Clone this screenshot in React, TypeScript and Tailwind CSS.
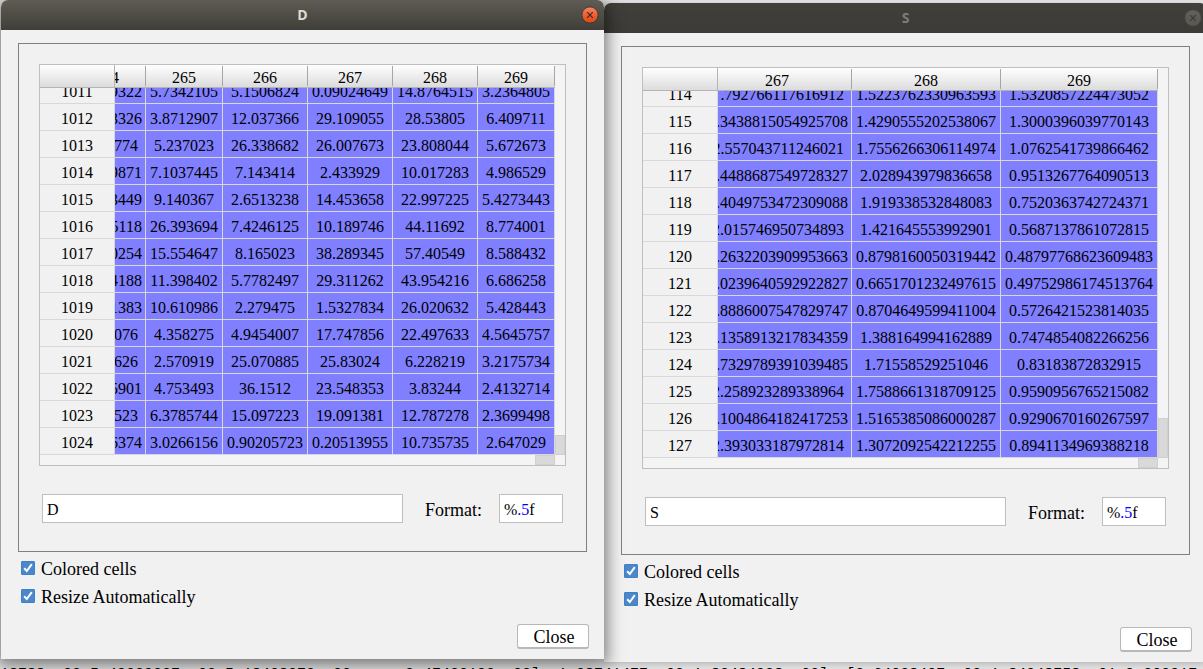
import React from "react";

type Column = { label: string; width: string; headAlign?: string };
type WindowProps = {
  name: string;
  active: boolean;
  place: string;
  columns: Column[];
  rows: string[][];
  thumb: string;
};

const dColumns: Column[] = [
  { label: "264", width: "w-[31px]", headAlign: "justify-end pr-[26px]" },
  { label: "265", width: "w-[77px]" },
  { label: "266", width: "w-[85px]" },
  { label: "267", width: "w-[85px]" },
  { label: "268", width: "w-[85px]" },
  { label: "269", width: "w-[77px]" },
];

const dRows: string[][] = [
  ["1011", "9322", "5.7342105", "5.1506824", "0.09024649", "14.8764515", "3.2364805"],
  ["1012", "3326", "3.8712907", "12.037366", "29.109055", "28.53805", "6.409711"],
  ["1013", "774", "5.237023", "26.338682", "26.007673", "23.808044", "5.672673"],
  ["1014", "9871", "7.1037445", "7.143414", "2.433929", "10.017283", "4.986529"],
  ["1015", "3449", "9.140367", "2.6513238", "14.453658", "22.997225", "5.4273443"],
  ["1016", "5118", "26.393694", "7.4246125", "10.189746", "44.11692", "8.774001"],
  ["1017", "0254", "15.554647", "8.165023", "38.289345", "57.40549", "8.588432"],
  ["1018", "4188", "11.398402", "5.7782497", "29.311262", "43.954216", "6.686258"],
  ["1019", "1383", "10.610986", "2.279475", "1.5327834", "26.020632", "5.428443"],
  ["1020", "076", "4.358275", "4.9454007", "17.747856", "22.497633", "4.5645757"],
  ["1021", "626", "2.570919", "25.070885", "25.83024", "6.228219", "3.2175734"],
  ["1022", "5901", "4.753493", "36.1512", "23.548353", "3.83244", "2.4132714"],
  ["1023", "523", "6.3785744", "15.097223", "19.091381", "12.787278", "2.3699498"],
  ["1024", "6374", "3.0266156", "0.90205723", "0.20513955", "10.735735", "2.647029"],
];

const sColumns: Column[] = [
  { label: "267", width: "w-[134px]", headAlign: "justify-end pr-[62px]" },
  { label: "268", width: "w-[149px]" },
  { label: "269", width: "w-[157px]" },
];

const sRows: string[][] = [
  ["114", ".792766117616912", "1.5223762330963593", "1.5320857224473052"],
  ["115", ".3438815054925708", "1.4290555202538067", "1.3000396039770143"],
  ["116", "2.557043711246021", "1.7556266306114974", "1.0762541739866462"],
  ["117", ".4488687549728327", "2.028943979836658", "0.9513267764090513"],
  ["118", ".4049753472309088", "1.919338532848083", "0.7520363742724371"],
  ["119", "2.015746950734893", "1.421645553992901", "0.5687137861072815"],
  ["120", ".2632203909953663", "0.8798160050319442", "0.48797768623609483"],
  ["121", ".0239640592922827", "0.6651701232497615", "0.49752986174513764"],
  ["122", ".8886007547829747", "0.8704649599411004", "0.5726421523814035"],
  ["123", ".1358913217834359", "1.388164994162889", "0.7474854082266256"],
  ["124", ".7329789391039485", "1.71558529251046", "0.83183872832915"],
  ["125", "2.258923289338964", "1.7588661318709125", "0.9590956765215082"],
  ["126", ".1004864182417253", "1.5165385086000287", "0.9290670160267597"],
  ["127", "2.393033187972814", "1.3072092542212255", "0.8941134969388218"],
];

/* Values in the first, partly scrolled-out column keep the right gap of their centred text. */
function edgeGap(text: string) {
  const short = text.length === 3 || text.startsWith("2.") || text.length === 16;
  return short ? "justify-end pr-[7px]" : "justify-end pr-[3px]";
}

function Cell({ text, first, align }: { text: string; first: boolean; align: string }) {
  return (
    <div className={`flex items-end overflow-hidden whitespace-nowrap ${first ? "h-[15px]" : "h-[26px]"} ${align}`}>
      <span className="h-[26px] leading-[29px]">{text}</span>
    </div>
  );
}

function Grid({ name, columns, rows, thumb }: Pick<WindowProps, "name" | "columns" | "rows" | "thumb">) {
  return (
    <div className="grid grid-cols-[1fr_10px] border border-[#bfbfbf] bg-[#f4f4f4]">
      <table aria-label={name} className="w-full table-fixed border-separate border-spacing-0 text-base">
        <colgroup>
          <col className="w-[75px]" />
          {columns.map((c) => (
            <col key={c.label} className={c.width} />
          ))}
        </colgroup>
        <thead>
          <tr>
            <td className="border-r border-b border-[#b4b4b4] bg-linear-to-b from-white to-[#dcdcdc] p-0" />
            {columns.map((c) => (
              <th
                key={c.label}
                scope="col"
                className="border-b border-[#b4b4b4] bg-linear-to-b from-white to-[#dcdcdc] p-0 font-normal"
              >
                <div className="flex h-[22px] items-center">
                  <div className={`flex h-5 flex-1 items-end overflow-hidden border-r border-[#a6a6a6] ${c.headAlign ?? "justify-center"}`}>
                    <span className="h-5 leading-[23px]">{c.label}</span>
                  </div>
                </div>
              </th>
            ))}
          </tr>
        </thead>
        <tbody>
          {rows.map((row, r) => (
            <tr key={row[0]}>
              <th scope="row" className="border-r border-b border-[#d8d8d8] bg-[#f1f1f1] p-0 font-normal">
                <Cell text={row[0]} first={r === 0} align="justify-center" />
              </th>
              {row.slice(1).map((value, i) => (
                <td key={i} className="border-r border-b border-[#d8d8d8] bg-[#7f7fff] p-0">
                  <Cell text={value} first={r === 0} align={i === 0 ? edgeGap(value) : "justify-center"} />
                </td>
              ))}
            </tr>
          ))}
        </tbody>
      </table>
      <div className="flex flex-col justify-end">
        <div className={`border border-[#d0d0d0] bg-[#d9d9d9] ${thumb}`} />
      </div>
      <div className="flex h-[10px] justify-end">
        <div className="w-5 border border-[#d0d0d0] bg-[#d9d9d9]" />
      </div>
    </div>
  );
}

function Check({ label }: { label: string }) {
  return (
    <label className="flex h-7 items-start gap-[6px] text-lg leading-[17px]">
      <span className="grid size-[14px]">
        <input
          type="checkbox"
          defaultChecked
          className="peer col-start-1 row-start-1 size-[14px] appearance-none rounded-[1px] border border-[#4080c4] bg-white checked:bg-[#4a87cb]"
        />
        <svg
          viewBox="0 0 14 14"
          className="pointer-events-none invisible col-start-1 row-start-1 size-[14px] peer-checked:visible"
          fill="none"
          stroke="white"
          strokeWidth="2"
        >
          <path d="M3.2 7.2 5.8 10 10.8 3.2" />
        </svg>
      </span>
      {label}
    </label>
  );
}

function DialogWindow({ name, active, place, columns, rows, thumb }: WindowProps) {
  return (
    <section
      aria-label={name}
      className={`absolute w-[603px] rounded-t-[7px] bg-[#f1f1f1] ${place} ${
        active ? "shadow-[0_3px_16px_3px_rgba(0,0,0,0.5)]" : "shadow-[0_2px_10px_rgba(0,0,0,0.25)]"
      }`}
    >
      <header
        className={`grid h-[30px] grid-cols-[1fr_auto_1fr] items-center rounded-t-[7px] px-[5px] ${
          active
            ? "bg-linear-to-b from-[#5e5c54] to-[#3f3e38]"
            : "bg-linear-to-b from-[#403f3a] to-[#3c3b37]"
        }`}
      >
        <h2
          className={`col-start-2 font-['Open_Sans',sans-serif] text-sm font-bold ${
            active ? "text-[#dfdbd2]" : "text-[#7f7d78]"
          }`}
        >
          {name}
        </h2>
        <button type="button" aria-label={`Close ${name}`} className="justify-self-end">
          <svg viewBox="0 0 18 18" className="size-[18px]">
            <defs>
              <linearGradient id={`close-${name}`} x1="0" y1="0" x2="0" y2="1">
                <stop offset="0" stopColor={active ? "#f58a68" : "#64625d"} />
                <stop offset="0.5" stopColor={active ? "#ee5f33" : "#5d5b56"} />
                <stop offset="1" stopColor={active ? "#dd4814" : "#5a5853"} />
              </linearGradient>
            </defs>
            <circle cx="9" cy="9" r="8.1" fill={`url(#close-${name})`} stroke={active ? "#37352f" : "#4b4a45"} strokeWidth="0.8" />
            <path d="M6.2 6.2 11.8 11.8M11.8 6.2 6.2 11.8" stroke={active ? "#3b2a20" : "#3c3b37"} strokeWidth="1.2" />
          </svg>
        </button>
      </header>
      <div className="px-[17px] pt-[13px] pb-[10px]">
        <div className="flex flex-col gap-7 border border-[#808080] px-5 pt-5 pb-7">
          <Grid name={name} columns={columns} rows={rows} thumb={thumb} />
          <div className="flex items-center px-[3px] text-lg">
            <input
              aria-label="Name"
              defaultValue={name}
              className="h-[29px] min-w-0 flex-1 border border-[#bfbfbf] bg-white px-1 pt-[2px] text-base outline-none"
            />
            <label htmlFor={`format-${name}`} className="w-24 pt-[2px] pl-[22px] leading-6">
              Format:
            </label>
            <span className="grid h-[29px] w-16 grid-rows-[29px]">
              <input
                id={`format-${name}`}
                defaultValue="%.5f"
                className="col-start-1 row-start-1 min-w-0 border border-[#bfbfbf] bg-white px-1 text-base text-transparent caret-black outline-none"
              />
              <span aria-hidden="true" className="pointer-events-none col-start-1 row-start-1 pl-[5px] text-base leading-[31px]">
                %<span className="text-[#0000ff]">.5</span>f
              </span>
            </span>
          </div>
        </div>
        <div className="flex flex-col px-[3px] pt-[9px]">
          <Check label="Colored cells" />
          <Check label="Resize Automatically" />
        </div>
        <div className="-mr-[2px] flex justify-end pt-[7px]">
          <button
            type="button"
            className="h-[25px] w-[72px] rounded-[3px] border border-b-2 border-[#b8b8b8] bg-white pl-[2px] text-lg leading-6"
          >
            Close
          </button>
        </div>
      </div>
    </section>
  );
}

export default function App() {
  return (
    <main className="relative flex h-screen min-h-[669px] flex-col justify-end overflow-hidden bg-[#e9e9e9] font-['Liberation_Serif',serif] text-black">
      <p className="h-[3px] overflow-hidden font-['Liberation_Mono',monospace] text-[15px] leading-[17px] whitespace-pre">
        18788e+02 5.49029237e+02 5.18408073e+02   e  3.47430193e+02]  1.08741477e+02 1.82484928e+02]  [2.64028407e+02 1.84948758e+01 9.209917e+02
      </p>
      <DialogWindow name="S" active={false} place="top-[3px] left-[604px]" columns={sColumns} rows={sRows} thumb="h-10" />
      <DialogWindow name="D" active place="top-0 left-px" columns={dColumns} rows={dRows} thumb="h-5" />
    </main>
  );
}
